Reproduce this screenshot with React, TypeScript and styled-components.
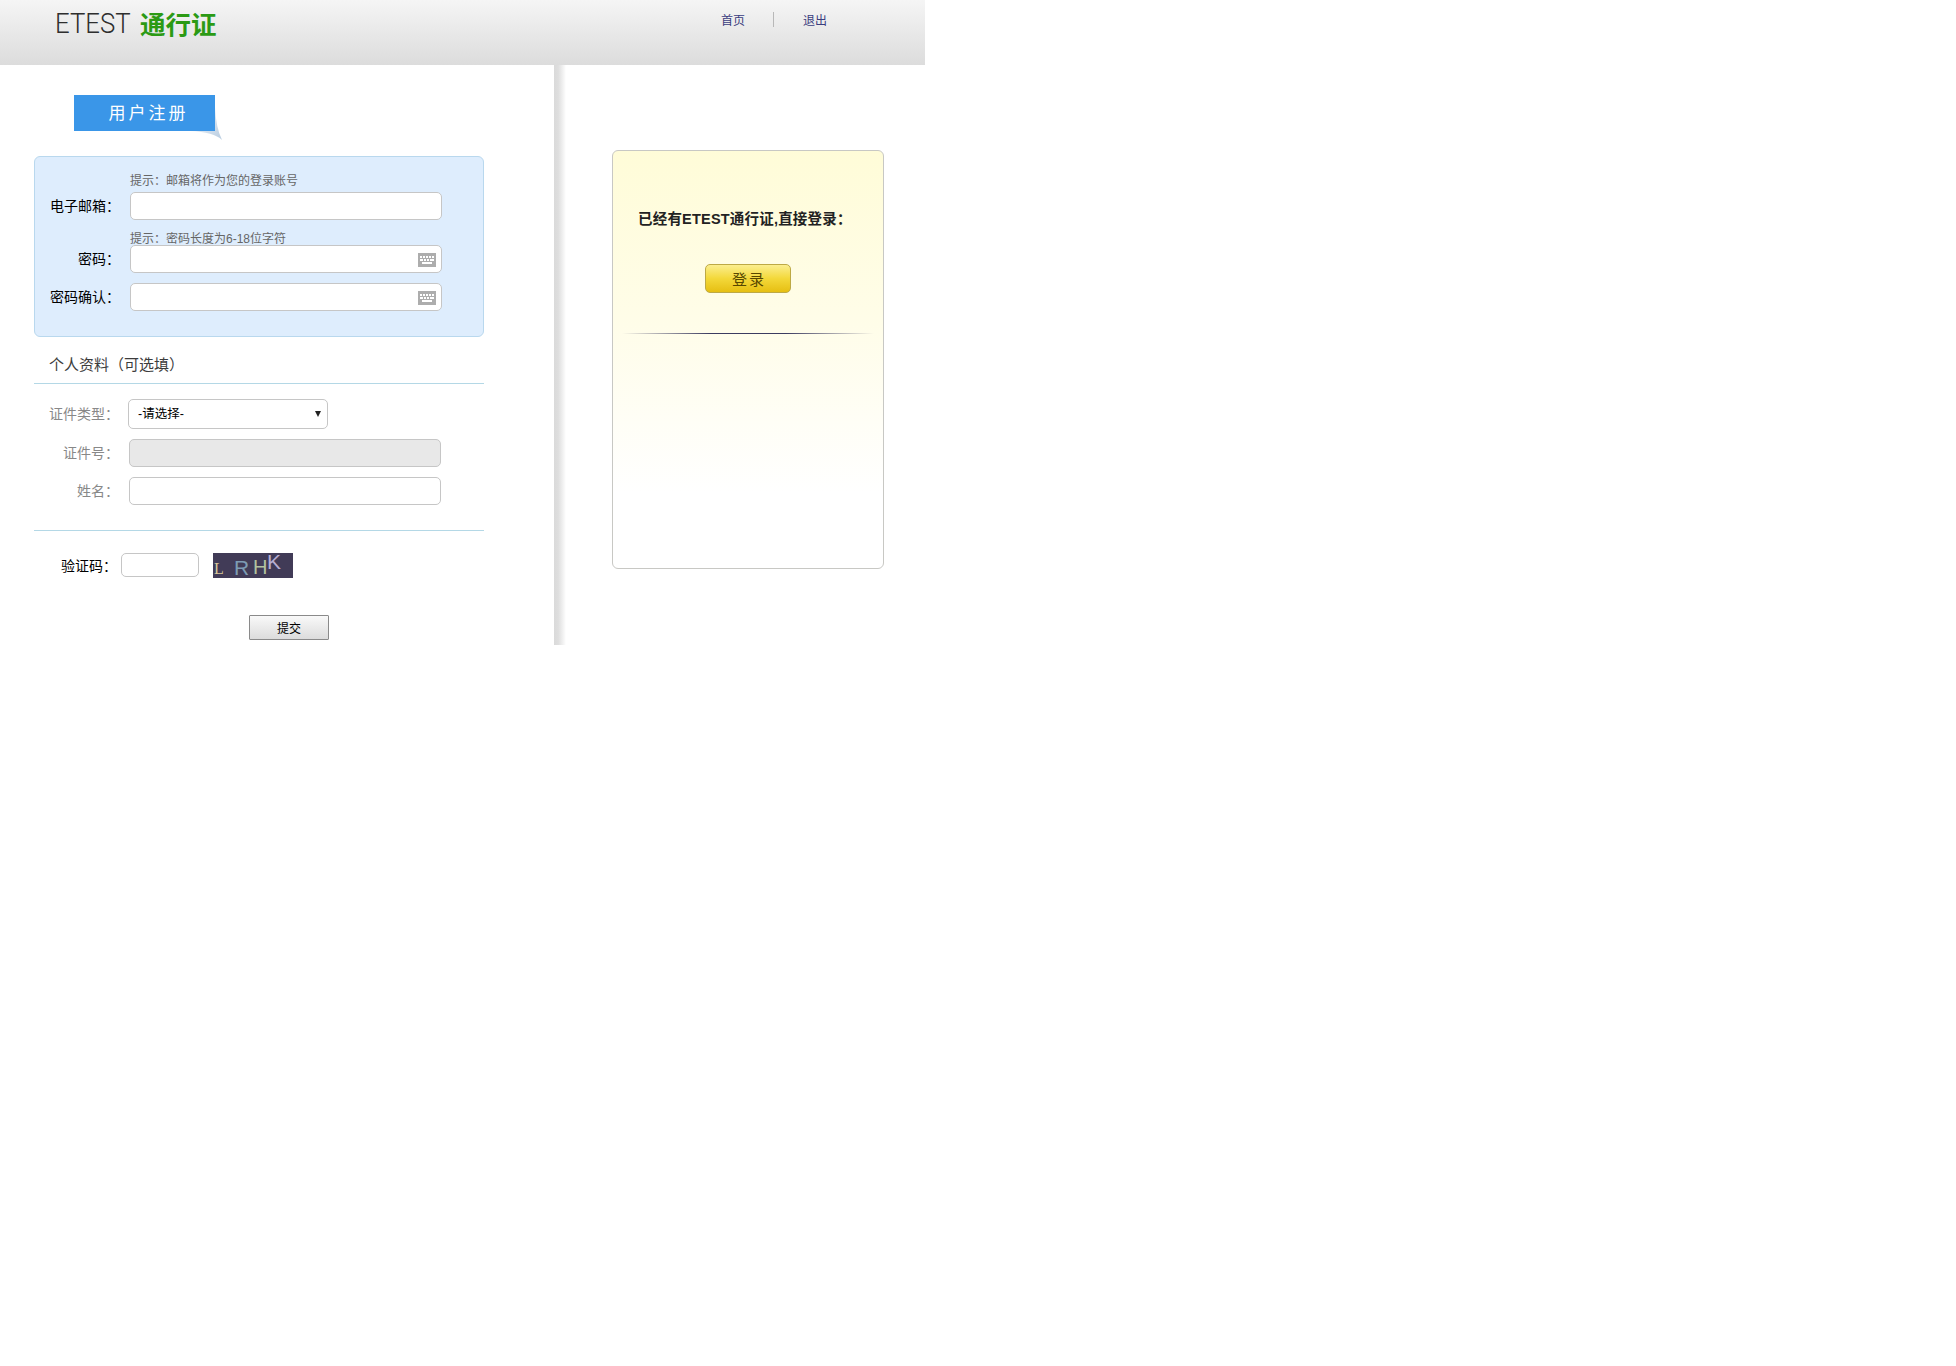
import React from "react";
import styled, { createGlobalStyle } from "styled-components";

const Global = createGlobalStyle`
  html, body { margin: 0; padding: 0; background: #fff; }
  body { font-family: "Liberation Sans", "Noto Sans CJK SC", sans-serif; font-size: 12px; color: #000; }
  * { box-sizing: border-box; }
`;

const Page = styled.div`width: 925px;`;

const Header = styled.header`
  height: 65px;
  display: flex;
  justify-content: space-between;
  align-items: flex-start;
  background: linear-gradient(to bottom, #f5f5f5 0%, #dcdcdc 100%);
`;
const Logo = styled.div`
  display: flex;
  align-items: center;
  height: 44px;
  padding-left: 55px;
`;
const LogoLatin = styled.span`
  display: inline-block;
  width: 85px;
  padding-top: 2px;
  font-family: "Roboto", sans-serif;
  font-weight: 300;
  font-size: 28px;
  color: #2e2e2e;
  transform: scaleX(0.92);
  transform-origin: left center;
`;
const LogoCjk = styled.span`
  font-size: 25.5px;
  font-weight: 700;
  color: #2b9a14;
`;
const Nav = styled.nav`
  display: flex;
  align-items: center;
  height: 39px;
  margin-right: 98px;
  gap: 28.5px;
`;
const NavLink = styled.a`
  font-size: 12px;
  color: #3a3d7e;
  text-decoration: none;
`;
const NavSep = styled.span`
  width: 1px;
  height: 15px;
  background: #b8b8b8;
`;

const Body = styled.main`
  display: flex;
  height: 580px;
`;
const LeftColumn = styled.section`
  width: 554px;
  flex: none;
`;
const Stripe = styled.div`
  width: 12px;
  flex: none;
  background: linear-gradient(to right, #dadada 0%, #dedede 35%, #efefef 70%, #ffffff 100%);
`;
const RightColumn = styled.aside`
  flex: 1;
  padding: 85px 0 0 46px;
`;

const TitleTag = styled.div`
  position: relative;
  width: 141px;
  height: 36px;
  margin: 30px 0 25px 74px;
  padding-left: 8px;
  background: #3a96e8;
  color: #fff;
  font-size: 17px;
  letter-spacing: 3px;
  line-height: 38px;
  text-align: center;
`;
const TagFold = styled.svg`
  position: absolute;
  left: 110px;
  top: 8px;
`;

const RequiredBox = styled.div`
  width: 450px;
  height: 181px;
  margin-left: 34px;
  padding-top: 16px;
  background: #deedfd;
  border: 1px solid #b9d8ee;
  border-radius: 6px;
`;
const Hint = styled.div<{ $top: number; $bottom: number }>`
  margin: ${(p) => p.$top}px 0 ${(p) => p.$bottom}px 95px;
  font-size: 12px;
  height: 14px;
  line-height: 16px;
  color: #666;
  white-space: nowrap;
`;
const Row = styled.div<{ $top?: number; $left?: number }>`
  display: flex;
  align-items: center;
  margin-top: ${(p) => p.$top ?? 0}px;
  margin-left: ${(p) => p.$left ?? 0}px;
`;
const Label = styled.label<{ $muted?: boolean; $width?: number; $gap?: number }>`
  width: ${(p) => p.$width ?? 85}px;
  margin-right: ${(p) => p.$gap ?? 10}px;
  padding-bottom: 2px;
  flex: none;
  font-size: 14px;
  text-align: right;
  color: ${(p) => (p.$muted ? "#888" : "#000")};
`;
const InputWrap = styled.div`
  position: relative;
  width: 312px;
  height: 28px;
`;
const TextInput = styled.input<{ $disabledLook?: boolean }>`
  display: block;
  width: 100%;
  height: 100%;
  padding: 0 6px;
  background: ${(p) => (p.$disabledLook ? "#e8e8e8" : "#fff")};
  border: 1px solid #c6c6c6;
  border-radius: 5px;
  outline: none;
`;
const KeyboardIcon = styled.svg`
  position: absolute;
  right: 6px;
  top: 8px;
`;

const SectionHeading = styled.h2`
  width: 450px;
  margin: 0 0 15px 34px;
  padding: 18px 0 8px 15px;
  font-size: 15px;
  font-weight: 400;
  line-height: 20px;
  color: #3c3c3c;
  border-bottom: 1px solid #b4d8e6;
`;
const SelectWrap = styled.div`
  position: relative;
  width: 200px;
  height: 30px;
  margin-left: -1px;
  &::after {
    content: "";
    position: absolute;
    left: 187px;
    top: 12px;
    border-left: 3px solid transparent;
    border-right: 3px solid transparent;
    border-top: 6px solid #222;
    pointer-events: none;
  }
`;
const TypeSelect = styled.select`
  display: block;
  width: 100%;
  height: 100%;
  padding-left: 9px;
  appearance: none;
  font-family: inherit;
  font-size: 12.5px;
  color: #000;
  background: #fff;
  border: 1px solid #c6c6c6;
  border-radius: 5px;
  outline: none;
`;
const Rule = styled.hr`
  width: 450px;
  height: 1px;
  margin: 25px 0 22px 34px;
  border: 0;
  background: #b4d8e6;
`;
const CaptchaInput = styled.input`
  align-self: flex-start;
  width: 78px;
  height: 24px;
  padding: 0 4px;
  background: #fff;
  border: 1px solid #c6c6c6;
  border-radius: 5px;
  outline: none;
`;
const CaptchaImage = styled.svg`
  display: block;
  margin-left: 14px;
`;
const SubmitButton = styled.button`
  display: block;
  width: 80px;
  height: 25px;
  margin: 37px 0 0 249px;
  padding: 0;
  font-family: inherit;
  font-size: 12px;
  color: #000;
  background: linear-gradient(to bottom, #f9f9f9, #dcdcdc);
  border: 1px solid #8a8a8a;
  border-radius: 1px;
`;

const LoginCard = styled.div`
  width: 272px;
  height: 419px;
  padding-top: 58px;
  background: linear-gradient(to bottom, #fffcd8 0%, #fffde8 40%, #fffef6 65%, #ffffff 82%);
  border: 1px solid #c8c8c4;
  border-radius: 6px;
`;
const LoginPrompt = styled.p`
  margin: 0 0 0 25px;
  font-size: 14.5px;
  letter-spacing: 0.2px;
  font-weight: 700;
  line-height: 20px;
  color: #222;
  white-space: nowrap;
`;
const LoginButton = styled.button`
  display: block;
  width: 86px;
  height: 29px;
  margin: 35px auto 0;
  padding: 0 0 0 2px;
  font-family: inherit;
  font-size: 15px;
  letter-spacing: 2px;
  color: #574700;
  background: linear-gradient(to bottom, #fbee8e 0%, #f3d83a 50%, #e6bf12 100%);
  border: 1px solid #bda945;
  border-radius: 5px;
`;
const CardRule = styled.div`
  height: 1px;
  margin: 40px 9px 0;
  background: linear-gradient(to right, rgba(60,60,90,0) 0%, #3c3c60 35%, #3c3c60 65%, rgba(60,60,90,0) 100%);
`;

const Keyboard = () => (
  <KeyboardIcon width="18" height="14" viewBox="0 0 18 14">
    <rect width="18" height="14" fill="#adadad" />
    <g fill="#fff">
      <rect x="2" y="3" width="2" height="2" /><rect x="5" y="3" width="2" height="2" /><rect x="8" y="3" width="2" height="2" /><rect x="11" y="3" width="2" height="2" /><rect x="14" y="3" width="2" height="2" />
      <rect x="2" y="6" width="3" height="2" /><rect x="6" y="6" width="2" height="2" /><rect x="9" y="6" width="2" height="2" /><rect x="12" y="6" width="4" height="2" />
      <rect x="4" y="9" width="10" height="2" />
    </g>
  </KeyboardIcon>
);

export default function App() {
  return (
    <Page>
      <Global />
      <Header>
        <Logo>
          <LogoLatin>ETEST</LogoLatin>
          <LogoCjk>通行证</LogoCjk>
        </Logo>
        <Nav>
          <NavLink href="#">首页</NavLink>
          <NavSep />
          <NavLink href="#">退出</NavLink>
        </Nav>
      </Header>
      <Body>
        <LeftColumn>
          <TitleTag>
            用户注册
            <TagFold width="40" height="40" viewBox="0 0 40 40">
              <defs>
                <linearGradient id="fold" x1="0" y1="0" x2="1" y2="1">
                  <stop offset="0" stopColor="#ffffff" />
                  <stop offset="1" stopColor="#b8cce0" />
                </linearGradient>
              </defs>
              <path d="M6 28 Q30 29 38 37 Q32 25 31 4 L31 28 Z" fill="url(#fold)" />
            </TagFold>
          </TitleTag>
          <RequiredBox>
            <Hint $top={0} $bottom={5}>提示：邮箱将作为您的登录账号</Hint>
            <Row>
              <Label>电子邮箱：</Label>
              <InputWrap><TextInput /></InputWrap>
            </Row>
            <Hint $top={11} $bottom={0}>提示：密码长度为6-18位字符</Hint>
            <Row>
              <Label>密码：</Label>
              <InputWrap><TextInput type="password" /><Keyboard /></InputWrap>
            </Row>
            <Row $top={10}>
              <Label>密码确认：</Label>
              <InputWrap><TextInput type="password" /><Keyboard /></InputWrap>
            </Row>
          </RequiredBox>
          <SectionHeading>个人资料（可选填）</SectionHeading>
          <Row $left={34}>
            <Label $muted>证件类型：</Label>
            <SelectWrap>
              <TypeSelect defaultValue="">
                <option value="">-请选择-</option>
              </TypeSelect>
            </SelectWrap>
          </Row>
          <Row $top={10} $left={34}>
            <Label $muted>证件号：</Label>
            <InputWrap><TextInput $disabledLook disabled /></InputWrap>
          </Row>
          <Row $top={10} $left={34}>
            <Label $muted>姓名：</Label>
            <InputWrap><TextInput /></InputWrap>
          </Row>
          <Rule />
          <Row $left={34}>
            <Label $width={83} $gap={4}>验证码：</Label>
            <CaptchaInput />
            <CaptchaImage width="80" height="25" viewBox="0 0 80 25">
              <rect width="80" height="25" fill="#413b57" />
              <text x="1" y="21" fontFamily="Liberation Serif" fontSize="16" fill="#d8c79a">L</text>
              <text x="21" y="22" fontFamily="Liberation Sans" fontSize="21" fill="#7d9cb4">R</text>
              <text x="40" y="21" fontFamily="Liberation Sans" fontSize="20" fill="#b2c3a0">H</text>
              <text x="54" y="16" fontFamily="Liberation Sans" fontSize="21" fill="#b8aed2">K</text>
            </CaptchaImage>
          </Row>
          <SubmitButton>提交</SubmitButton>
        </LeftColumn>
        <Stripe />
        <RightColumn>
          <LoginCard>
            <LoginPrompt>已经有ETEST通行证,直接登录：</LoginPrompt>
            <LoginButton>登录</LoginButton>
            <CardRule />
          </LoginCard>
        </RightColumn>
      </Body>
    </Page>
  );
}
